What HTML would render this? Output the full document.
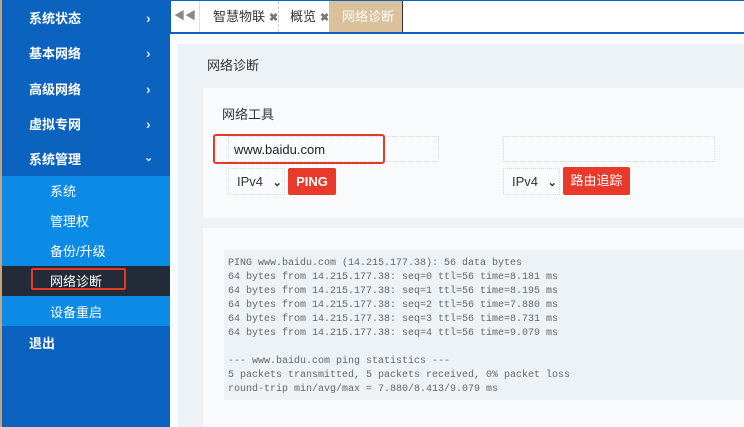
<!DOCTYPE html><html><head><meta charset="utf-8"><style>
*{margin:0;padding:0;box-sizing:border-box}
body{width:744px;height:427px;overflow:hidden;position:relative;background:#fafbfc;font-family:"Liberation Sans","Noto Sans CJK SC",sans-serif}
.sb{position:absolute;left:0;top:0;width:170px;height:427px;background:#0c63bf;border-left:2px solid #c8a27a}
.it{position:absolute;left:27px;color:#fff;font-size:13px;font-weight:bold}
.ar{position:absolute;left:144px;color:#d6e6f7;font-size:14px;font-weight:bold}
.sub{position:absolute;left:2px;top:176px;width:168px;height:150px;background:#0b8ae6}
.si{position:absolute;left:50px;color:#fff;font-size:13px}
.act{position:absolute;left:2px;top:266px;width:168px;height:30px;background:#232b38}
.tabs{position:absolute;left:170px;top:0;width:574px;height:34px;background:#fff;border-top:1px solid #0c63bf;border-left:1px solid #0c63bf;border-bottom:2px solid #0c63bf}
.t{position:absolute;top:0;height:31px;line-height:31px;font-size:13px;color:#333}
.x{color:#777;font-size:11px;font-weight:bold;margin-left:4px}
.a{position:absolute;background:#edf2f6}
.c{position:absolute;background:#f9fafb}
.box{position:absolute;border:1px dotted #cfdde6;background:#fafbfc}
pre{position:absolute;left:224px;top:250px;width:520px;height:150px;background:#edf2f6;font-family:"Liberation Mono",monospace;font-size:10px;line-height:14px;color:#666;padding:7px 4px 0}
</style></head><body>
<div class="sb">
<div class="it" style="top:8px">系统状态</div><div class="ar" style="top:10px">›</div>
<div class="it" style="top:43px">基本网络</div><div class="ar" style="top:45px">›</div>
<div class="it" style="top:79px">高级网络</div><div class="ar" style="top:81px">›</div>
<div class="it" style="top:114px">虚拟专网</div><div class="ar" style="top:116px">›</div>
<div class="it" style="top:149px">系统管理</div><div class="ar" style="top:151px;font-size:11px;left:142px">⌄</div>
<div class="it" style="top:333px">退出</div>
</div>
<div class="sub"></div><div class="act"></div>
<div class="si" style="top:181px">系统</div>
<div class="si" style="top:211px">管理权</div>
<div class="si" style="top:241px">备份/升级</div>
<div class="si" style="top:271px">网络诊断</div>
<div style="position:absolute;left:31px;top:268px;width:95px;height:22px;border:2px solid #e33a2a;border-radius:2px"></div>
<div class="si" style="top:302px">设备重启</div>
<div class="tabs">
<div class="t" style="left:0;width:29px;border-right:1px solid #dde;text-align:center;color:#888;font-size:11px">◀◀</div>
<div class="t" style="left:42px">智慧物联<span class="x">✖</span></div>
<div class="t" style="left:107px;border-left:1px dashed #ccc;padding-left:11px">概览<span class="x">✖</span></div>
<div class="t" style="left:158px;width:74px;background:#dbc19b;color:#fff;padding-left:13px;border-right:1px solid #333">网络诊断<span class="x">✖</span></div>
</div>
<div class="a" style="left:178px;top:44px;width:566px;height:383px"></div>
<div style="position:absolute;left:207px;top:55px;font-size:13px;color:#333">网络诊断</div>
<div class="c" style="left:203px;top:88px;width:541px;height:130px"></div>
<div class="c" style="left:203px;top:228px;width:541px;height:199px"></div>
<div style="position:absolute;left:222px;top:104px;font-size:13px;color:#333">网络工具</div>
<div class="box" style="left:228px;top:136px;width:211px;height:26px"></div>
<div style="position:absolute;left:213px;top:134px;width:172px;height:30px;border:2px solid #e33a2a;border-radius:3px"></div>
<div style="position:absolute;left:234px;top:142px;font-size:13px;color:#222">www.baidu.com</div>
<div class="box" style="left:228px;top:168px;width:57px;height:27px;font-size:13px;color:#333;line-height:25px;padding-left:8px">IPv4 <b style="font-size:11px;margin-left:6px">⌄</b></div>
<div style="position:absolute;left:288px;top:168px;width:48px;height:27px;background:#e8392a;color:#fff;font-size:13px;font-weight:bold;text-align:center;line-height:27px;border-radius:2px">PING</div>
<div class="box" style="left:503px;top:136px;width:212px;height:26px"></div>
<div class="box" style="left:503px;top:168px;width:57px;height:27px;font-size:13px;color:#333;line-height:25px;padding-left:8px">IPv4 <b style="font-size:11px;margin-left:6px">⌄</b></div>
<div style="position:absolute;left:563px;top:167px;width:67px;height:28px;background:#e8392a;color:#fff;font-size:13px;text-align:center;line-height:28px;border-radius:2px">路由追踪</div>
<pre>PING www.baidu.com (14.215.177.38): 56 data bytes
64 bytes from 14.215.177.38: seq=0 ttl=56 time=8.181 ms
64 bytes from 14.215.177.38: seq=1 ttl=56 time=8.195 ms
64 bytes from 14.215.177.38: seq=2 ttl=56 time=7.880 ms
64 bytes from 14.215.177.38: seq=3 ttl=56 time=8.731 ms
64 bytes from 14.215.177.38: seq=4 ttl=56 time=9.079 ms

--- www.baidu.com ping statistics ---
5 packets transmitted, 5 packets received, 0% packet loss
round-trip min/avg/max = 7.880/8.413/9.079 ms</pre>
</body></html>
